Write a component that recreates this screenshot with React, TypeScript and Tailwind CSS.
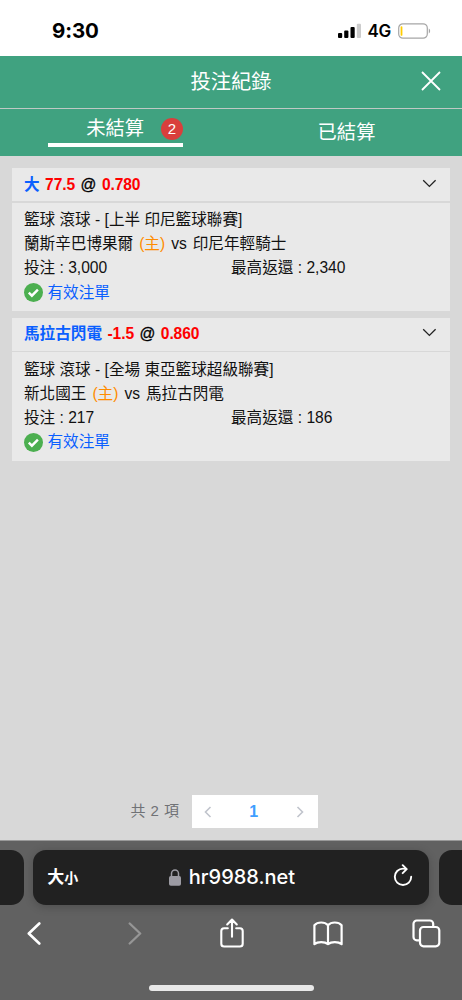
interface Bet {
  pick: string;
  line: string;
  odds: string;
  event: string;
  home: string;
  away: string;
  stake: string;
  payout: string;
}

const BETS: Bet[] = [
  {
    pick: "大",
    line: "77.5",
    odds: "0.780",
    event: "籃球 滾球 - [上半 印尼籃球聯賽]",
    home: "蘭斯辛巴博果爾",
    away: "印尼年輕騎士",
    stake: "3,000",
    payout: "2,340",
  },
  {
    pick: "馬拉古閃電",
    line: "-1.5",
    odds: "0.860",
    event: "籃球 滾球 - [全場 東亞籃球超級聯賽]",
    home: "新北國王",
    away: "馬拉古閃電",
    stake: "217",
    payout: "186",
  },
];

function StatusBar() {
  return (
    <div className="flex h-[55.5px] shrink-0 items-start justify-between bg-white pl-[52px] pr-[31px] pt-[19px] text-black font-['Inter',sans-serif]">
      <span className="text-[20.5px] font-bold leading-6 tracking-[-0.1px]">9:30</span>
      <div className="flex h-6 items-center">
        <svg width="24" height="16" viewBox="0 0 24 16" className="mr-[6px]">
          <rect x="0" y="10" width="4.2" height="5" rx="1" fill="#000" />
          <rect x="6.2" y="7.5" width="4.2" height="7.5" rx="1" fill="#000" />
          <rect x="12.5" y="4" width="4.2" height="11" rx="1" fill="#000" />
          <rect x="18.8" y="0.7" width="4.2" height="14.3" rx="1" fill="#ccc" />
        </svg>
        <span className="text-[17px] font-semibold leading-6 tracking-[-0.3px]">4G</span>
        <svg width="33" height="17" viewBox="0 0 33 17" className="ml-[7px]">
          <rect x="0.7" y="0.8" width="28.6" height="14.4" rx="4.2" fill="none" stroke="#a6a6a6" strokeWidth="1.2" />
          <rect x="2.6" y="3.2" width="1.8" height="9.6" rx="0.9" fill="#ffcc00" />
          <path d="M30.8 5.6v5c1.8-.7 1.8-4.3 0-5z" fill="#a6a6a6" />
        </svg>
      </div>
    </div>
  );
}

function BetCard({ bet }: { bet: Bet }) {
  return (
    <div className="flex flex-col gap-[1.5px] text-[15.6px] leading-6">
      <div className="flex h-[33px] items-center justify-between bg-[#e9e9e9] pl-3 pr-[13px]">
        <div className="flex gap-[5.5px] font-bold text-[#ff0000]">
          <span className="text-[#0a5fff]">{bet.pick}</span>
          <span className="tracking-[-0.1px]">{bet.line}</span>
          <span className="font-medium text-black [-webkit-text-stroke:0.3px_black]">@</span>
          <span className="tracking-[-0.1px]">{bet.odds}</span>
        </div>
        <svg width="15" height="9" viewBox="0 0 15 9" className="mb-[3px]" fill="none" stroke="#222" strokeWidth="1.3">
          <path d="M1.2 1.2l6.2 6.2 6.2-6.2" />
        </svg>
      </div>
      <div className="h-[108.5px] bg-[#e9e9e9] px-3 pt-[5.5px] text-[#111]">
        <p>{bet.event}</p>
        <p className="flex gap-[6px]">
          <span>{bet.home}</span>
          <span className="text-[#ff8c00]">(主)</span>
          <span>vs</span>
          <span>{bet.away}</span>
        </p>
        <div className="grid grid-cols-2">
          <span>投注 : {bet.stake}</span>
          <span>最高返還 : {bet.payout}</span>
        </div>
        <div className="-ml-[0.5px] flex items-center gap-[5px] pt-[0.5px] text-[#0a5fff]">
          <svg width="19" height="19" viewBox="0 0 19 19">
            <circle cx="9.5" cy="9.5" r="9.5" fill="#4caf50" />
            <path d="M4.8 9.6l3.1 3.1 6-6" fill="none" stroke="#fff" strokeWidth="2.4" />
          </svg>
          <span>有效注單</span>
        </div>
      </div>
    </div>
  );
}

function Browser() {
  return (
    <div className="flex h-[160.5px] shrink-0 flex-col border-t border-[#999] bg-[#616161] pt-[9px] text-white">
      <div className="flex h-[55px] justify-between">
        <div className="w-[23.5px] rounded-r-[13px] bg-[#212121]" />
        <div className="flex w-[395.5px] items-center justify-between rounded-[13px] bg-[#212121] pl-[14px] pr-[16px] shadow-[0_2px_10px_rgba(0,0,0,0.2)]">
          <span className="w-[60px] pt-px text-[17px] font-bold leading-6">
            大<span className="text-[14px]">小</span>
          </span>
          <div className="flex items-center gap-[8px] pl-[4px]">
            <svg width="12" height="17" viewBox="0 0 12 17">
              <rect x="0" y="7" width="12" height="9.7" rx="1.8" fill="#9c9ba3" />
              <path d="M2.5 8V4.5a3.5 3.5 0 0 1 7 0V8" fill="none" stroke="#9c9ba3" strokeWidth="1.5" />
            </svg>
            <span className="text-[20px] font-medium leading-6 font-['Inter',sans-serif]">hr9988.net</span>
          </div>
          <div className="flex w-[60px] justify-end pb-[3px]">
            <svg width="20" height="23" viewBox="0 0 20 23" fill="none" stroke="#fff" strokeWidth="1.9" strokeLinecap="round" strokeLinejoin="round">
              <path d="M18.2 12.8a8.2 8.2 0 1 1-8.2-8.2c1.1 0 2.2.1 3.2.5" />
              <path d="M9.7 1.2l4 4-4 4" />
            </svg>
          </div>
        </div>
        <div className="w-[23.5px] rounded-l-[13px] bg-[#212121]" />
      </div>
      <div className="mt-[12px] flex h-[34px] items-center justify-between pl-[27px] pr-[21px]">
        <svg width="14" height="23" viewBox="0 0 14 23" fill="none" stroke="#fff" strokeWidth="2.6" strokeLinecap="round" strokeLinejoin="round">
          <path d="M12.3 1.5l-10.5 10 10.5 10" />
        </svg>
        <svg width="14" height="23" viewBox="0 0 14 23" className="ml-[18px]" fill="none" stroke="#969696" strokeWidth="2.3" strokeLinecap="round" strokeLinejoin="round">
          <path d="M1.7 1.5l10.5 10-10.5 10" />
        </svg>
        <svg width="24" height="30" viewBox="0 0 24 30" className="ml-[8px] mb-[1px]" fill="none" stroke="#fff" strokeWidth="2.1" strokeLinecap="round" strokeLinejoin="round">
          <path d="M7.8 10.2H4.1a2.8 2.8 0 0 0-2.8 2.8v12.7a2.8 2.8 0 0 0 2.8 2.8h15.8a2.8 2.8 0 0 0 2.8-2.8V13a2.8 2.8 0 0 0-2.8-2.8h-3.7M12 18.7V1.8M7.2 6.4L12 1.6l4.8 4.8" />
        </svg>
        <svg width="30" height="25" viewBox="0 0 30 25" fill="none" stroke="#fff" strokeWidth="2.2" strokeLinecap="round" strokeLinejoin="round">
          <path d="M15 4.2C11.8.6 4.6.6 1.4 4.2v19c3.2-2.9 10.4-2.9 13.6 0 3.2-2.9 10.4-2.9 13.6 0v-19C25.4.6 18.2.6 15 4.2zM15 4.2v19" />
        </svg>
        <svg width="29" height="29" viewBox="0 0 29 29" fill="none" stroke="#fff" strokeWidth="2.2" strokeLinejoin="round">
          <rect x="8" y="8" width="19.3" height="19.3" rx="3.5" />
          <path d="M7.5 21.3H4.8A3.3 3.3 0 0 1 1.5 18V4.8a3.3 3.3 0 0 1 3.3-3.3h13.1a3.3 3.3 0 0 1 3.3 3.3v2.7" />
        </svg>
      </div>
      <div className="mt-[34px] h-[6px] w-[165px] self-center rounded-full bg-[#e8e8e8]" />
    </div>
  );
}

export default function App() {
  return (
    <div className="flex h-[1000px] w-[462px] flex-col overflow-hidden bg-[#d8d8d8] font-['Liberation_Sans','Noto_Sans_CJK_TC',sans-serif]">
      <StatusBar />
      <header className="grid h-[53px] shrink-0 grid-cols-[1fr_auto_1fr] items-center border-b border-[#bfc9c5] bg-[#40a280] px-[21px] text-white">
        <span />
        <h1 className="text-[20.3px] font-normal leading-7">投注紀錄</h1>
        <svg width="20" height="20" viewBox="0 0 20 20" className="mb-[2px] justify-self-end" fill="none" stroke="#fff" strokeWidth="1.8">
          <path d="M1 1l18 18M19 1L1 19" />
        </svg>
      </header>
      <nav className="grid h-[47.5px] shrink-0 grid-cols-2 justify-items-center bg-[#40a280] text-[19.3px] font-normal leading-[28px] text-white">
        <div className="mt-[6px] flex h-8 w-[135px] items-center justify-end gap-[17px] border-b-4 border-white">
          <span>未結算</span>
          <span className="flex size-[22px] items-center justify-center rounded-full bg-[#d93f3c] text-[15px] leading-none">2</span>
        </div>
        <span className="mt-[10px]">已結算</span>
      </nav>
      <main className="flex grow flex-col px-3 pt-[12px]">
        <div className="flex flex-col gap-[6.5px]">
          {BETS.map((bet) => (
            <BetCard key={bet.pick} bet={bet} />
          ))}
        </div>
        <div className="mb-[11.5px] mt-auto flex items-center justify-center gap-[12px] pr-[14px] text-[15px] text-[#707276]">
          <span className="tracking-[0.5px]">共 2 項</span>
          <div className="flex h-[33px] w-[126px] items-center justify-between bg-white px-[13px]">
            <svg width="8" height="12" viewBox="0 0 8 12" className="-ml-px" fill="none" stroke="#c0c4cc" strokeWidth="1.6">
              <path d="M6.5 1L1.5 6l5 5" />
            </svg>
            <span className="text-[16px] font-bold text-[#409eff]">1</span>
            <svg width="8" height="12" viewBox="0 0 8 12" className="mr-px" fill="none" stroke="#c0c4cc" strokeWidth="1.6">
              <path d="M1.5 1l5 5-5 5" />
            </svg>
          </div>
        </div>
      </main>
      <Browser />
    </div>
  );
}
